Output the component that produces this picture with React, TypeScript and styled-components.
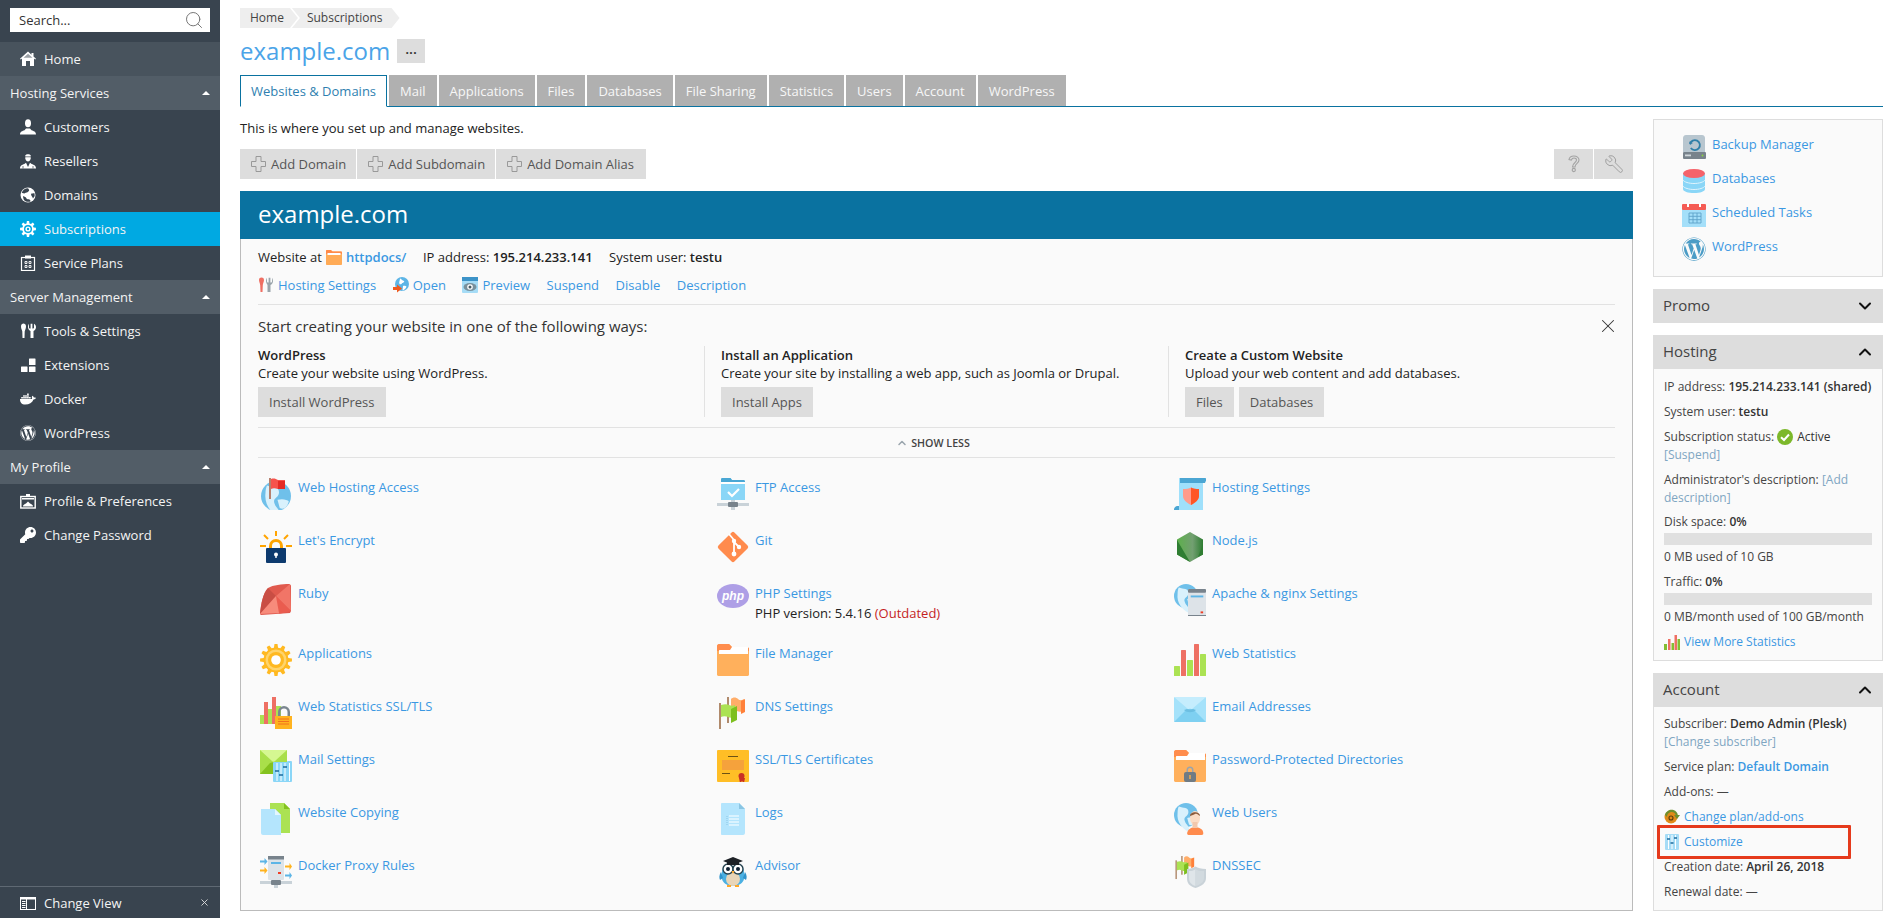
import { ReactNode } from "react";
import styled, { createGlobalStyle } from "styled-components";
import { FaDocker, FaKey, FaWordpress } from "react-icons/fa";
import { ChevronDown, ChevronUp, Search, Wrench, X } from "lucide-react";

const GlobalStyle = createGlobalStyle`
  html, body {
    margin: 0;
    padding: 0;
    height: 918px;
    overflow: hidden;
    background: #fff;
    font-family: "Open Sans", "Liberation Sans", sans-serif;
    font-size: 13px;
    color: #222;
  }
  * { box-sizing: border-box; }
`;

const Page = styled.div`
  display: flex;
  width: 1901px;
  height: 918px;
`;

/* ---------- sidebar ---------- */

const Sidebar = styled.nav`
  width: 220px;
  flex: none;
  height: 918px;
  background: #39444f;
  display: flex;
  flex-direction: column;
  color: #f4f4f4;
`;

const SearchStrip = styled.div`
  height: 42px;
  padding: 8px 10px 0;
`;

const SearchBox = styled.div`
  height: 24px;
  background: #fff;
  color: #333;
  display: flex;
  align-items: center;
  justify-content: space-between;
  padding: 0 6px 0 9px;
  font-size: 13px;
  svg { color: #777; }
`;

const NavRow = styled.div<{ $active?: boolean; $home?: boolean }>`
  height: 34px;
  display: flex;
  align-items: center;
  gap: 8px;
  padding-left: 20px;
  background: ${({ $active, $home }) =>
    $active ? "#00a9e2" : $home ? "#48535d" : "transparent"};
  svg { flex: none; }
`;

const NavGroup = styled.div`
  height: 34px;
  display: flex;
  align-items: center;
  justify-content: space-between;
  padding: 0 10px;
  background: #525d67;
`;

const Caret = styled.span`
  width: 0;
  height: 0;
  border-left: 4px solid transparent;
  border-right: 4px solid transparent;
  border-bottom: 4px solid #fff;
`;

const NavSpacer = styled.div`
  flex: 1;
`;

const ChangeView = styled.div`
  height: 32px;
  border-top: 1px solid #5f6973;
  display: flex;
  align-items: center;
  gap: 8px;
  padding: 0 10px 0 20px;
  span:nth-of-type(1) { flex: 1; }
  > svg:last-child { color: #ddd; }
`;

/* ---------- main ---------- */

const Main = styled.main`
  flex: 1;
  padding: 8px 18px 0 20px;
  display: flex;
  flex-direction: column;
  min-width: 0;
`;

const Breadcrumbs = styled.div`
  display: flex;
  height: 20px;
  font-size: 12px;
  color: #444;
`;

const Crumb = styled.div<{ $first?: boolean }>`
  height: 20px;
  line-height: 20px;
  background: #eee;
  padding: ${({ $first }) => ($first ? "0 14px 0 10px" : "0 17px 0 15px")};
  margin-left: ${({ $first }) => ($first ? "0" : "-6px")};
  clip-path: ${({ $first }) =>
    $first
      ? "polygon(0 0, calc(100% - 8px) 0, 100% 50%, calc(100% - 8px) 100%, 0 100%)"
      : "polygon(0 0, calc(100% - 8px) 0, 100% 50%, calc(100% - 8px) 100%, 0 100%, 8px 50%)"};
`;

const TitleRow = styled.div`
  display: flex;
  align-items: center;
  height: 24px;
  margin-top: 11px;
  gap: 7px;
`;

const Title = styled.h1`
  margin: 0;
  font-size: 24px;
  font-weight: 400;
  color: #4ba4e8;
  line-height: 24px;
`;

const MoreButton = styled.div`
  width: 28px;
  height: 24px;
  background: #ddd;
  color: #333;
  display: flex;
  align-items: center;
  justify-content: center;
  font-weight: 700;
  font-size: 12px;
  letter-spacing: 0.5px;
  padding-bottom: 3px;
`;

const TabBar = styled.div`
  display: flex;
  gap: 2px;
  height: 32px;
  margin-top: 12px;
  border-bottom: 1px solid #0a72a0;
`;

const Tab = styled.div<{ $active?: boolean }>`
  height: ${({ $active }) => ($active ? "32px" : "31px")};
  padding: 0 ${({ $active }) => ($active ? "10px" : "11px")};
  background: ${({ $active }) => ($active ? "#fff" : "#b0b0b0")};
  color: ${({ $active }) => ($active ? "#2f7fb0" : "#f7f7f7")};
  border: ${({ $active }) => ($active ? "1px solid #0a72a0" : "none")};
  border-bottom: ${({ $active }) => ($active ? "1px solid #fff" : "none")};
  line-height: ${({ $active }) => ($active ? "31px" : "33px")};
`;

const Columns = styled.div`
  display: flex;
  gap: 20px;
`;

const LeftColumn = styled.div`
  width: 1393px;
  flex: none;
  padding-top: 11px;
`;

const RightColumn = styled.aside`
  width: 230px;
  flex: none;
  padding-top: 12px;
  display: flex;
  flex-direction: column;
  gap: 12px;
  position: relative;
`;

const Description = styled.p`
  margin: 0;
  line-height: 20px;
`;

const Toolbar = styled.div`
  display: flex;
  justify-content: space-between;
  margin-top: 11px;
`;

const ToolGroup = styled.div`
  display: flex;
  gap: 1px;
`;

const ToolButton = styled.div<{ $square?: boolean; $wide?: boolean }>`
  height: 30px;
  background: #ddd;
  color: #555;
  display: flex;
  align-items: center;
  gap: 5px;
  padding: ${({ $square, $wide }) =>
    $square ? "0" : $wide ? "0 12px 0 11px" : "0 10px 0 11px"};
  width: ${({ $square }) => ($square ? "39px" : "auto")};
  justify-content: ${({ $square }) => ($square ? "center" : "flex-start")};
`;

const Panel = styled.section`
  margin-top: 12px;
`;

const PanelBand = styled.div`
  height: 48px;
  background: #0a72a0;
  color: #fff;
  font-size: 24px;
  line-height: 46px;
  padding-left: 18px;
`;

const PanelBody = styled.div`
  height: 672px;
  background: #fafafa;
  border: 1px solid #bbb;
  border-top: none;
  padding: 8px 17px 0 17px;
`;

const InfoRow = styled.div`
  display: flex;
  align-items: center;
  gap: 16.5px;
  height: 20px;
`;

const Inline = styled.span`
  display: inline-flex;
  align-items: center;
  gap: 4px;
`;

const Strong = styled.b`
  font-weight: 600;
`;

const A = styled.a<{ $bold?: boolean }>`
  color: #3a98e2;
  font-weight: ${({ $bold }) => ($bold ? 600 : 400)};
`;

const ActionRow = styled.div`
  display: flex;
  align-items: center;
  gap: 16.5px;
  height: 20px;
  margin-top: 8px;
`;

const StartHeader = styled.div`
  display: flex;
  justify-content: space-between;
  align-items: center;
  margin-top: 9px;
  border-top: 1px solid #e2e2e2;
  padding-top: 9px;
  height: 33px;
  font-size: 15px;
  color: #333;
  svg { color: #333; margin-right: -4px; }
`;

const StartColumns = styled.div`
  display: grid;
  grid-template-columns: 463px 464px 1fr;
  margin-top: 9px;
  height: 71px;
`;

const StartColumn = styled.div<{ $separated?: boolean }>`
  padding-left: ${({ $separated }) => ($separated ? "16px" : "0")};
  border-left: ${({ $separated }) => ($separated ? "1px solid #e2e2e2" : "none")};
  margin-left: ${({ $separated }) => ($separated ? "-17px" : "0")};
  line-height: 18px;
`;

const StartHeading = styled.div`
  font-weight: 600;
  color: #222;
`;

const StartText = styled.div`
  color: #222;
`;

const StartButtons = styled.div`
  display: flex;
  gap: 5px;
  margin-top: 5px;
`;

const FlatButton = styled.div`
  height: 30px;
  line-height: 30px;
  padding: 0 11px;
  background: #ddd;
  color: #555;
`;

const ShowLess = styled.div`
  height: 31px;
  margin-top: 10px;
  border-top: 1px solid #e2e2e2;
  border-bottom: 1px solid #e2e2e2;
  display: flex;
  align-items: center;
  justify-content: center;
  gap: 3px;
  font-size: 10.7px;
  font-weight: 600;
  color: #444;
  padding-right: 7px;
  svg { color: #9aa5ad; }
`;

const LinkGrid = styled.div`
  display: grid;
  grid-template-columns: repeat(3, 457px);
  row-gap: 21px;
  margin-top: 20px;
  padding-left: 2px;
`;

const LinkItem = styled.div`
  display: flex;
  gap: 6px;
  min-height: 32px;
  line-height: 18px;
  svg { flex: none; }
`;

const LinkNote = styled.div`
  line-height: 19px;
  color: #222;
  margin-top: 2px;
`;

const Outdated = styled.span`
  color: #c51f1f;
`;

/* ---------- right column ---------- */

const QuickBox = styled.div`
  height: 158px;
  background: #fafafa;
  border: 1px solid #ddd;
  padding: 15px 0 0 28px;
  display: flex;
  flex-direction: column;
  gap: 10px;
`;

const QuickLink = styled.div`
  display: flex;
  align-items: flex-start;
  gap: 6px;
  height: 24px;
  line-height: 18px;
  svg { flex: none; }
`;

const CardHeader = styled.div`
  height: 34px;
  background: #ddd;
  display: flex;
  justify-content: space-between;
  align-items: center;
  padding: 0 8px 2px 10px;
  font-size: 15px;
  color: #444;
  svg { color: #111; margin-top: 2px; }
`;

const CardBody = styled.div<{ $tight?: boolean }>`
  background: #fafafa;
  border: 1px solid #ddd;
  border-top: none;
  padding: ${({ $tight }) => ($tight ? "8px 10px 9px" : "9px 10px")};
  font-size: 12px;
  line-height: 18px;
  color: #444;
`;

const Fact = styled.div<{ $close?: boolean }>`
  margin-bottom: ${({ $close }) => ($close ? "6px" : "7px")};
  &:last-child { margin-bottom: 0; }
`;

const FactStrong = styled.b`
  font-weight: 600;
  color: #333;
`;

const Muted = styled.span`
  color: #7fa6c2;
`;

const StatusLine = styled.div`
  display: flex;
  align-items: center;
  gap: 3px;
  height: 18px;
  color: #444;
`;

const StatusValue = styled.span`
  color: #333;
  margin-left: 1px;
`;

const Usage = styled.div`
  height: 12px;
  background: #e0e0e0;
  margin: 2px 0 3px;
`;

const WithIcon = styled.div`
  display: flex;
  align-items: center;
  gap: 4px;
  height: 18px;
  margin-bottom: 7px;
  &:last-child { margin-bottom: 0; }
`;

const Highlight = styled.div`
  position: absolute;
  left: 4px;
  top: 718px;
  width: 194px;
  height: 34px;
  border: 3px solid #e53a1c;
  border-radius: 1px;
  pointer-events: none;
`;

/* ---------- icons ---------- */

function gearPath(c: number, rOut: number, rIn: number, teeth: number) {
  const pts: string[] = [];
  for (let i = 0; i < teeth; i++) {
    const step = (Math.PI * 2) / teeth;
    const a = i * step - Math.PI / 2;
    const p = (r: number, d: number) =>
      `${(c + r * Math.cos(a + d)).toFixed(2)} ${(c + r * Math.sin(a + d)).toFixed(2)}`;
    pts.push(p(rIn, -step * 0.32), p(rOut, -step * 0.18), p(rOut, step * 0.18), p(rIn, step * 0.32));
  }
  return `M${pts.join("L")}Z`;
}

const White = ({ children, size = 16 }: { children: ReactNode; size?: number }) => (
  <svg width={size} height={size} viewBox="0 0 16 16" fill="#fff">
    {children}
  </svg>
);

const NavHome = () => (
  <White>
    <path d="M8 .5 0 7.8l.8.8L2 7.6V15h4v-5h4v5h4V7.6l1.2 1 .8-.8L13.500 5.500V2h-2v1.700z" />
    <path d="M8 2.800 3.500 6.800h9z" fill="#48535d" opacity=".55" />
  </White>
);
const NavCustomer = () => (
  <White>
    <ellipse cx="8" cy="4.300" rx="3" ry="4" />
    <path d="M0 15.500c0-3 2.500-3.600 4.500-4.300L6 9.500h4l1.500 1.700c2 .7 4.500 1.300 4.500 4.300z" />
  </White>
);
const NavReseller = () => (
  <White>
    <path d="M5.300 2.500C6 .8 10 .8 10.700 2.500v2.700C10.500 7.500 9 8.500 8 8.500S5.500 7.500 5.300 5.200z" />
    <path d="M5 3.800h6" stroke="#39444f" strokeWidth=".7" />
    <path d="M0 15.500c0-3 2-3.500 4.300-4.500L6 9.700 8 14l2-4.300 1.700 1.300c2.300 1 4.300 1.500 4.300 4.500z" />
    <path d="M3 13v2.500M13 13v2.500" stroke="#39444f" strokeWidth=".7" />
  </White>
);
const NavGlobe = () => (
  <White>
    <circle cx="8" cy="8" r="7.500" />
    <path d="M8 1.300c-3 0-5.500 2-6.300 4.800.8-.4 1.700.2 2.800.4.600-1 2-.6 3-1.300C8.800 4.300 9.500 3.500 9 2.800 8.800 2.300 8.400 1.800 8 1.300zM3 9c1.500.8 3 1 3.500 2.500.4 1 2 .4 3 1 .8.500 1.200 1.300 1 2-1 .3-5 .8-6.700-1.800C3.300 11.500 3 10 3 9zM11 6.800c1-.4 2.500-.8 3.500-.5l.2 2.700-1.700 2.500c-.5-1.700-2-2.500-2-4.700z" fill="#39444f" />
  </White>
);
const NavGear = () => (
  <svg width="16" height="16" viewBox="0 0 16 16">
    <path d={gearPath(8, 8, 5.800, 8)} fill="#fff" />
    <circle cx="8" cy="8" r="4" fill="#00a9e2" />
    <circle cx="8" cy="8" r="2.600" fill="#fff" />
    <circle cx="8" cy="8" r="1.200" fill="#00a9e2" />
  </svg>
);
const NavPlans = () => (
  <svg width="16" height="16" viewBox="0 0 16 16" fill="none" stroke="#fff">
    <rect x="1.500" y="2.500" width="13" height="13" strokeWidth="1.200" />
    <rect x="5" y=".5" width="6" height="3" fill="#fff" stroke="none" />
    <path d="M5 6.500h2v2H5zM9 6.500h2v2H9zM5 10.500h2v2H5zM9 10.500h2v2H9z" strokeWidth=".9" />
  </svg>
);
const NavTools = () => (
  <White>
    <path d="M1 3.500C1 1.300 2.300.5 3.500.5S6 1.300 6 3.500 5 7 4.700 8.500L4.500 15h-2l-.2-6.500C2 7 1 5.500 1 3.500z" />
    <path d="M9 .8V4.500c0 .6.500 1 1 1h.6V.8h1.800v4.700h.6c.5 0 1-.4 1-1V.8C15.500 1.500 16 3 16 4.200c0 2-1.500 3.300-2.500 3.800V15h-3V8C9.500 7.500 8 6.200 8 4.200 8 3 8.400 1.500 9 .8z" />
  </White>
);
const NavExtensions = () => (
  <White>
    <rect x="1" y="9.500" width="6.500" height="5.500" rx=".5" />
    <rect x="9" y="9.500" width="6.500" height="5.500" rx=".5" />
    <rect x="9" y="1.500" width="6.500" height="6.500" rx=".5" />
  </White>
);
const NavProfile = () => (
  <svg width="16" height="16" viewBox="0 0 16 16" fill="none">
    <rect x=".8" y="3.500" width="14.400" height="11.500" stroke="#fff" strokeWidth="1.400" />
    <rect x="6" y="1" width="4" height="3" fill="#fff" />
    <path d="M3 13.500c0-2 1.500-2 3-3l2-2 2 2c1.500 1 3 1 3 3z" fill="#fff" />
    <rect x="2" y="5" width="12" height="1.500" fill="#fff" />
  </svg>
);
const NavChangeView = () => (
  <svg width="16" height="16" viewBox="0 0 16 16" fill="none" stroke="#fff">
    <rect x=".5" y="2.500" width="15" height="12" strokeWidth="1" />
    <path d="M.5 3.500h15" strokeWidth="2" />
    <path d="M2 6.500h3.500M2 8.500h3.500M2 10.500h3.500M2 12.500h3.500" strokeWidth="1" />
    <path d="M6.500 3v11" strokeWidth="1" />
  </svg>
);

const PlusIcon = () => (
  <svg width="15" height="16" viewBox="0 0 15 16" fill="none" stroke="#999">
    <path d="M5 .5h5v5h4.500v5H10v5H5v-5H.5v-5H5z" />
  </svg>
);
const QuestionIcon = () => (
  <svg width="14" height="18" viewBox="0 0 14 18" fill="none" stroke="#a3a3a3" strokeWidth="1.100">
    <path d="M2 4.500C2.500 2 4.500 1 6.800 1 9.800 1 12 2.700 12 5c0 3.500-4 3.300-4 7H5.500c0-4.500 4-4 4-7C9.500 3.700 8.400 3 7 3 5.700 3 4.800 3.700 4.300 5z" />
    <circle cx="6.800" cy="15" r="1.600" />
  </svg>
);
const MirroredWrench = styled(Wrench)`
  transform: scaleX(-1);
`;

const TinyFolder = () => (
  <svg width="16" height="15" viewBox="0 0 16 15">
    <path d="M0 1.200C0 .5.500 0 1.200 0h3.600L6.500 1.500h8.300c.7 0 1.200.5 1.200 1.200V14c0 .6-.5 1-1 1H1c-.6 0-1-.4-1-1z" fill="#ffab57" />
    <path d="M0 1.200C0 .5.500 0 1.200 0h3.600L6.500 1.500h8.300c.7 0 1.200.5 1.200 1.200V4H0z" fill="#ff8a4a" />
    <path d="M1.500 3h13v2h-13z" fill="#fff" />
  </svg>
);
const TinyTools = () => (
  <svg width="16" height="16" viewBox="0 0 16 16">
    <path d="M1 3C1 1.300 2 .5 3.500.5S6 1.300 6 3c0 2-1 3-1.200 5L4.500 15h-2l-.3-7C2 6 1 5 1 3z" fill="#ef6f63" />
    <path d="M9 .8v3.700c0 .6.500 1 1 1h.6V.8h1.800v4.700h.6c.5 0 1-.4 1-1V.8c.5.700 1 2.200 1 3.400 0 2-1.500 3.300-2.500 3.800V15h-3V8C9.500 7.500 8 6.200 8 4.200 8 3 8.400 1.500 9 .8z" fill="#9aa4ab" />
  </svg>
);
const TinyOpen = () => (
  <svg width="16" height="18" viewBox="0 0 16 18">
    <circle cx="9" cy="8" r="7" fill="#5db5e6" />
    <path d="M7 2.500c2 .3 1.500 2 3.500 2.200 1.500.3.500 2-1.300 2.300-.700 1.500-1.500 1.500-2.700 1C5.500 6.500 7 4.500 7 2.500zM10 10c1.500-.5 3 0 3.500.8C12.500 13 11 14 9.500 14.500z" fill="#fff" />
    <path d="M0 11h4V8.500L9 12.500l-5 4V14H0z" fill="#f25a1d" />
  </svg>
);
const TinyPreview = () => (
  <svg width="16" height="16" viewBox="0 0 16 16">
    <rect y="0" width="16" height="16" rx="1" fill="#a6dcf6" />
    <rect y="0" width="16" height="4" fill="#3c93c8" />
    <ellipse cx="8" cy="10" rx="6.500" ry="4" fill="#78909c" />
    <circle cx="8" cy="10" r="2.800" fill="#fff" />
    <circle cx="8" cy="10" r="1.500" fill="#455a64" />
  </svg>
);
const GreenCheck = () => (
  <svg width="16" height="16" viewBox="0 0 16 16">
    <circle cx="8" cy="8" r="8" fill="#7cb82a" />
    <path d="M4 8.200 7 11l5-5.500" fill="none" stroke="#fff" strokeWidth="2" />
  </svg>
);
const TinyChart = () => (
  <svg width="16" height="16" viewBox="0 0 16 16">
    <rect x="0" y="10" width="3" height="6" fill="#84bd32" />
    <rect x="4" y="5" width="2.500" height="11" fill="#ef6f63" />
    <rect x="7.500" y="9" width="2.500" height="7" fill="#84bd32" />
    <rect x="10.500" y="1" width="2.500" height="15" fill="#ef6f63" />
    <rect x="13.500" y="5" width="2.500" height="11" fill="#84bd32" />
  </svg>
);
const TinyChange = () => (
  <svg width="16" height="16" viewBox="0 0 16 16">
    <circle cx="7" cy="8" r="6.500" fill="#e08a18" />
    <path d="M1 6c.8-4 5-6 8.500-5 2.500.8 4 2.700 4.300 5H16l-3 4-3-4h1.800C11 3.500 8.500 2.500 6.300 3.300 4 4 3 6 3 8z" fill="#6d8f2e" />
    <circle cx="7" cy="9" r="2" fill="none" stroke="#5a3d0c" strokeWidth="1.100" />
  </svg>
);
const TinySliders = () => (
  <svg width="16" height="16" viewBox="0 0 16 16">
    <rect width="14" height="16" x="1" rx="1" fill="#a6dcf6" />
    <path d="M4.500 1v14M8 1v14M11.500 1v14" stroke="#fff" />
    <path d="M3 5h3M6.500 9h3M10 4h3" stroke="#1c6b9f" strokeWidth="1.500" />
  </svg>
);

const Ic = ({ children, w = 32, h = 32, s = 32 }: { children: ReactNode; w?: number; h?: number; s?: number }) => (
  <svg width={s} height={s} viewBox={`0 0 ${w} ${h}`}>
    {children}
  </svg>
);

const GlobeArt = ({ cx, cy, r }: { cx: number; cy: number; r: number }) => (
  <>
    <circle cx={cx} cy={cy} r={r} fill="#6fc0ea" />
    <path
      d={`M${cx - r * 0.6} ${cy - r * 0.7}c${r * 0.4} ${r * 0.15} ${r * 0.8} ${r * 0.05} ${r * 0.8} ${r * 0.45}s${-r * 0.45} ${r * 0.35} ${-r * 0.3} ${r * 0.75}c${r * 0.1} ${r * 0.35} ${r * 0.5} ${r * 0.45} ${r * 0.3} ${r * 0.9}c${-r * 0.5} ${-r * 0.25} ${-r * 1} ${-r * 0.8} ${-r * 0.9} ${-r * 1.6}c0 ${-r * 0.2} ${r * 0.05} ${-r * 0.4} ${r * 0.1} ${-r * 0.5}z`}
      fill="#d9f1fc"
    />
    <path d={`M${cx + r * 0.1} ${cy + r * 0.25}c${r * 0.35} ${-r * 0.1} ${r * 0.65} 0 ${r * 0.75} ${r * 0.1}-${r * 0.1} ${r * 0.4}-${r * 0.35} ${r * 0.6}-${r * 0.6} ${r * 0.45}z`} fill="#d9f1fc" />
  </>
);

const ServerBox = ({ x, y, w, h }: { x: number; y: number; w: number; h: number }) => (
  <>
    <rect x={x} y={y} width={w} height={h} rx="1" fill="#dde3e8" />
    <rect x={x} y={y} width={w} height={h * 0.14} rx="1" fill="#78838c" />
    <rect x={x + w * 0.15} y={y + h * 0.24} width={w * 0.7} height={h * 0.07} fill="#5db5e6" />
    <rect x={x + w * 0.7} y={y + h * 0.83} width={w * 0.14} height={h * 0.07} fill="#ef3d25" />
    <rect x={x} y={y + h - 1} width={w} height="1" fill="#78838c" />
  </>
);

const FlagsArt = () => (
  <g>
    <rect x="2" y="6" width="2" height="26" fill="#b08a6c" />
    <rect x="10" y="0" width="2" height="26" fill="#b08a6c" />
    <path d="M14 2c2-2 5-2 7 0s5 1 6 0v12c-3 1-5 1-7 0s-4-1-6 0z" fill="#ffad69" />
    <path d="M24 4l4-2v13l-4 2z" fill="#ff8039" />
    <path d="M4 8c3-1 6-1 8 0s4 1 6 0v12c-3 1-5 1-7 0s-5-1-7 0z" fill="#abe253" />
    <path d="M14 12l6-3v14l-6 3z" fill="#7dbf1e" />
  </g>
);

const IWebHosting = () => (
  <Ic>
    <GlobeArt cx={16} cy={18} r={15} />
    <rect x="9" y="0" width="2" height="21" fill="#b6806d" />
    <path d="M11 1c3-1 5 0 7 1h7v9h-7c-3-1-5-1-7 0z" fill="#f6534c" />
    <rect x="18" y="3" width="7" height="8" fill="#e52b24" />
  </Ic>
);
const IFtp = () => (
  <Ic>
    <path d="M4 1.500C4 .7 4.500 0 5.500 0h8L15 2h11.500c.8 0 1.500.7 1.500 1.500V22H4z" fill="#8ad6f7" />
    <path d="M4 1.500C4 .7 4.500 0 5.500 0h8L15 2h11.500c.8 0 1.500.7 1.500 1.500V5H4z" fill="#4aa7d4" />
    <rect x="4" y="4" width="24" height="2" fill="#fff" />
    <path d="M11 14l4 4 7-7" fill="none" stroke="#fff" strokeWidth="2.200" />
    <rect x="14" y="22" width="4" height="10" fill="#c9d2d8" />
    <rect x="0" y="25" width="32" height="3" fill="#c9d2d8" />
    <rect x="11" y="24" width="10" height="5" rx="1" fill="#78838c" />
  </Ic>
);
const IHostingSettings = () => (
  <Ic>
    <path d="M5 0h27l-1 4H29v28H0c0-2 1-3 3-4h2z" fill="#9fe0fb" />
    <path d="M6 0h25c1 0 1.500 1 1 2.500L31 5H6z" fill="#4ba6d3" />
    <path d="M0 32c0-2 .5-3 3-4h2v4z" fill="#4ba6d3" />
    <path d="M9 11c3 0 6-.5 8-1.500 2 1 5 1.500 8 1.500v7c0 4-4 7-8 9-4-2-8-5-8-9z" fill="#ff9b8c" />
    <path d="M17 9.500c2 1 5 1.500 8 1.500v7c0 4-4 7-8 9z" fill="#ff5626" />
  </Ic>
);
const ILetsEncrypt = () => (
  <Ic>
    <path d="M9 18v-3a7 7 0 0 1 14 0v3h-3v-3a4 4 0 0 0-8 0v3z" fill="#ffa400" />
    <path d="M16 0v5M4 4l4 4M28 4l-4 4M0 15h6M26 15h6" stroke="#ffa400" strokeWidth="2" />
    <rect x="6" y="17" width="20" height="15" rx="1" fill="#0d3a6e" />
    <circle cx="16" cy="23.500" r="2" fill="#fff" />
    <rect x="15.300" y="24" width="1.400" height="3" fill="#fff" />
  </Ic>
);
const IGit = () => (
  <Ic>
    <rect x="4.700" y="4.700" width="22.600" height="22.600" rx="2" transform="rotate(45 16 16)" fill="#ff8b4d" />
    <path d="M12 3l5 6v12M17 11l5 5" fill="none" stroke="#fff" strokeWidth="1.800" />
    <circle cx="17" cy="10" r="2.200" fill="#fff" />
    <circle cx="17" cy="23" r="2.400" fill="#fff" />
    <circle cx="22" cy="16" r="2.200" fill="#fff" />
  </Ic>
);
const INode = () => (
  <Ic>
    <defs>
      <linearGradient id="nodeGrad" x1="0" y1="0" x2="1" y2="0">
        <stop offset="0" stopColor="#5db04b" />
        <stop offset="0.6" stopColor="#729f71" />
        <stop offset="1" stopColor="#2e7d32" />
      </linearGradient>
    </defs>
    <path d="M16 1l13 7.500v15L16 31 3 23.500v-15z" fill="url(#nodeGrad)" />
    <path d="M3 9l13 22L3 23.500zM29 13v10.500L24 26z" fill="#2f7d32" />
  </Ic>
);
const IRuby = () => (
  <Ic>
    <path d="M8 4c5-3 14-4 21-4 1 0 2 1 2 2v25l-1 2-29 2c-.5 0-1-1-1-1.500C1 20 3 9 8 4z" fill="#e05a4e" />
    <path d="M8 4l8 8L0 30C1 20 3 9 8 4z" fill="#c94e44" />
    <path d="M16 12l14-12 1 27z" fill="#f17567" />
    <path d="M16 12l15 15-12 3z" fill="#ec5d50" opacity=".8" />
    <path d="M0 30l19-1-3-17z" fill="#f78b7b" />
  </Ic>
);
const IPhp = () => (
  <Ic>
    <ellipse cx="16" cy="12" rx="16" ry="12" fill="#ae9fe6" />
    <text x="16" y="16" textAnchor="middle" fontFamily="'Liberation Sans', sans-serif" fontSize="12" fontWeight="700" fontStyle="italic" fill="#fff">
      php
    </text>
  </Ic>
);
const IApache = () => (
  <Ic>
    <GlobeArt cx={12} cy={12} r={12} />
    <ServerBox x={14} y={5} w={18} h={27} />
  </Ic>
);
const IApplications = () => (
  <Ic>
    <path d={gearPath(16, 16, 12.500, 12)} fill="#ffb921" />
    <circle cx="16" cy="16" r="10.500" fill="#ffd46b" />
    <circle cx="16" cy="16" r="8" fill="#ffb921" />
    <circle cx="16" cy="16" r="4.800" fill="#fff" />
  </Ic>
);
const FolderArt = () => (
  <>
    <path d="M0 2c0-1 1-2 2-2h10l3 3h15c1 0 2 1 2 2v25c0 1-1 2-2 2H2c-1 0-2-1-2-2z" fill="#ffb05c" />
    <path d="M0 2c0-1 1-2 2-2h10l3 3h15c1 0 2 1 2 2v2H0z" fill="#ff8d4d" />
    <path d="M2 8c0-2 0-2 1-2h10l2-3h15l1 0v7H2z" fill="#fff" />
    <path d="M0 12h32V30c0 1-1 2-2 2H2c-1 0-2-1-2-2z" fill="#ffb05c" />
  </>
);
const IFolder = () => (
  <Ic>
    <FolderArt />
  </Ic>
);
const IStats = () => (
  <Ic>
    <rect x="0" y="22" width="6" height="10" rx=".5" fill="#abe253" />
    <rect x="7" y="6" width="5" height="26" rx=".5" fill="#ee7064" />
    <rect x="13" y="16" width="6" height="16" rx=".5" fill="#abe253" />
    <rect x="20" y="0" width="5" height="32" rx=".5" fill="#ee7064" />
    <rect x="26" y="10" width="6" height="22" rx=".5" fill="#abe253" />
  </Ic>
);
const IStatsSsl = () => (
  <Ic>
    <rect x="0" y="18" width="6" height="9" fill="#abe253" />
    <rect x="4" y="5" width="4" height="22" fill="#ee7064" />
    <rect x="8" y="12" width="5" height="15" fill="#abe253" />
    <rect x="12" y="0" width="4" height="27" fill="#ee7064" />
    <rect x="16" y="9" width="5" height="18" fill="#abe253" />
    <path d="M18 20v-5a6 6 0 0 1 12 0v5h-2.500v-5a3.500 3.500 0 0 0-7 0v5z" fill="#7a868f" />
    <rect x="15" y="19" width="17" height="13" fill="#ffb31f" />
    <path d="M18 22h11M18 24.500h11M18 27h11" stroke="#f2711c" strokeWidth="1" />
  </Ic>
);
const IDns = () => (
  <Ic>
    <FlagsArt />
  </Ic>
);
const IEmail = () => (
  <Ic>
    <rect y="0" width="32" height="25" rx="1" fill="#a5e2fa" />
    <path d="M0 0h32L18 12c-1 1-3 1-4 0z" fill="#c5edfd" />
    <path d="M0 25l11-11c3-3 7-3 10 0l11 11z" fill="#7ed0f1" />
    <path d="M10 13l3-1c2 1 4 1 6 0l3 1c-3 3-9 3-12 0z" fill="#6cbfe2" />
  </Ic>
);
const IMail = () => (
  <Ic>
    <rect x="0" y="0" width="27" height="24" fill="#a9df4a" />
    <path d="M0 0h27L15 11c-1 1-2 1-3 0z" fill="#d5f791" />
    <path d="M0 24l10-11c2-1 5-1 7 0l10 11z" fill="#84c21f" />
    <rect x="13" y="12" width="16" height="20" rx="1" fill="#8ad6f7" />
    <path d="M17 13v18M21 13v18M25 13v18" stroke="#fff" strokeWidth="1" />
    <path d="M15 21h4M19 25h4M23 17h4" stroke="#1c6b9f" strokeWidth="1.500" />
    <rect x="27" y="11" width="5" height="21" rx="1" fill="#8ad6f7" />
    <path d="M29.500 13v18" stroke="#fff" />
  </Ic>
);
const ICert = () => (
  <Ic>
    <rect width="32" height="32" rx="1" fill="#ffbe26" />
    <rect x="5" y="10" width="22" height="10" fill="#f5a23c" />
    <rect x="11" y="6" width="10" height="1" fill="#6d5314" />
    <rect x="5" y="23" width="8" height="1" fill="#6d5314" />
    <path d="M22 28l1 5 2-2 2 2 1-5z" fill="#c93125" />
    <circle cx="24.500" cy="26" r="3" fill="#c93125" />
  </Ic>
);
const IFolderLock = () => (
  <Ic>
    <FolderArt />
    <path d="M12.500 24v-4a3.500 3.500 0 0 1 7 0v4h-1.500v-4a2 2 0 0 0-4 0v4z" fill="#9aa4ab" />
    <rect x="10" y="22" width="12" height="10" rx="2" fill="#707b84" />
    <rect x="15" y="25" width="2" height="4" fill="#d0a05c" />
  </Ic>
);
const ICopy = () => (
  <Ic>
    <path d="M10 0h14l6 6v24H10z" fill="#abe253" />
    <path d="M24 0l6 6h-6z" fill="#84c21f" />
    <path d="M1 6h14l6 6v20H3c-1 0-2-1-2-2z" fill="#b4e5fd" />
    <path d="M15 6l6 6h-6z" fill="#e3f6ff" />
  </Ic>
);
const ILogs = () => (
  <Ic>
    <path d="M4 1c0-.5.500-1 1-1h17l6 6v24c0 1-1 2-2 2H5c-.5 0-1-.5-1-1z" fill="#b4e5fd" />
    <path d="M22 0l6 6h-6z" fill="#8ac5e3" />
    <path d="M12 13h10M12 16h10M12 19h10M12 22h10" stroke="#e6f7ff" strokeWidth="1.600" />
    <path d="M10 13v10" stroke="#8ac5e3" strokeDasharray="1 1" />
  </Ic>
);
const IWebUsers = () => (
  <Ic>
    <GlobeArt cx={12} cy={12} r={12} />
    <path d="M9 32c-1 0-1.500-1-1.500-2 1-4 4-5 7-6h3c3 1 7 2 7 6 0 1 0 2-2 2z" fill="#ff8b4d" transform="translate(6 0) scale(.95 1)" />
    <ellipse cx="21" cy="15" rx="5" ry="7" fill="#fbdcc4" />
    <rect x="18.500" y="19" width="5" height="6" fill="#f2c8ac" />
    <path d="M16 13c0-5 10-5 10 0-2-1-3-3-5-2-1 1-3 1-5 2z" fill="#8a5b3c" />
  </Ic>
);
const IDocker = () => (
  <Ic>
    <rect x="8" y="0" width="16" height="24" rx="1" fill="#dde3e8" />
    <rect x="8" y="0" width="16" height="3.500" fill="#78838c" />
    <rect x="11" y="6" width="10" height="2" fill="#5db5e6" />
    <rect x="18" y="16" width="3" height="2" fill="#ef3d25" />
    <path d="M0 4.500h4.500V2l3 3.500-3 3.500V6.500H0z" fill="#5db5e6" />
    <path d="M0 13.500h4.500V11l3 3.500-3 3.500v-2.500H0z" fill="#ffb31f" />
    <path d="M25 9.500h4.500V7l2.500 3.500L29.500 14v-2.500H25z" fill="#ffb31f" />
    <path d="M25 18.500h4.500V16l2.500 3.500-2.500 3.500v-2.500H25z" fill="#5db5e6" />
    <rect x="14" y="24" width="4" height="8" fill="#c9d2d8" />
    <rect x="0" y="25" width="32" height="3" fill="#c9d2d8" />
    <rect x="11" y="24" width="10" height="5" rx="1" fill="#78838c" />
  </Ic>
);
const IOwl = () => (
  <Ic>
    <path d="M7 10c-2 3-3 9-2 13 1 4 5 7 11 7s10-3 11-7c1-4 0-10-2-13z" fill="#4bb0e2" />
    <path d="M4 16c-2 3-2 6-1 8l3-2zM28 16c2 3 2 6 1 8l-3-2z" fill="#3094cc" />
    <ellipse cx="16" cy="23" rx="7" ry="7" fill="#e8d5b8" />
    <circle cx="11" cy="13" r="5" fill="#fff" stroke="#25424f" strokeWidth="1.400" />
    <circle cx="21" cy="13" r="5" fill="#fff" stroke="#25424f" strokeWidth="1.400" />
    <circle cx="11" cy="13" r="2" fill="#123" />
    <circle cx="21" cy="13" r="2" fill="#123" />
    <path d="M14.500 15l1.500 3 1.500-3z" fill="#ffa726" />
    <path d="M6 5l10-4 10 4-10 4z" fill="#1d2126" />
    <rect x="10" y="6" width="12" height="3" fill="#1d2126" />
    <path d="M10 31h4v-2h-4zM18 31h4v-2h-4z" fill="#ffa726" />
  </Ic>
);
const IDnssec = () => (
  <Ic>
    <g transform="scale(.72)">
      <FlagsArt />
    </g>
    <path d="M13 13c4 0 6-1 8.500-2.500C24 12 27 13 32 13v9c0 5-4 8-10.500 10C15 30 13 27 13 22z" fill="#c9d2d8" />
    <path d="M15 15c3 0 4.500-.5 6.500-1.800V30C17 28.500 15 26 15 22z" fill="#dfe5e9" />
    <path d="M21.500 13.200c2 1.300 4 1.800 8.500 1.800v7c0 4-3.500 6.500-8.500 8z" fill="#d2dadf" />
  </Ic>
);

const QBackup = () => (
  <Ic w={24} h={24} s={24}>
    <path d="M1 3c0-1.500 1-3 3-3h16c2 0 3 1.500 3 3v14H1z" fill="#b8c6cf" />
    <rect x="1" y="17" width="23" height="7" rx="1" fill="#78838c" />
    <rect x="3" y="19.500" width="6" height="1.800" fill="#d0d7db" />
    <circle cx="20.500" cy="20.500" r="1" fill="#8cd440" />
    <path d="M7 6.500l1 3.500 3-2" fill="#4a88ad" />
    <path d="M8 9a5 5 0 1 1 .8 4" fill="none" stroke="#2f7fa8" strokeWidth="1.800" />
  </Ic>
);
const QDatabase = () => (
  <Ic w={24} h={24} s={24}>
    <path d="M1 4h22v16c0 2.500-5 4-11 4S1 22.500 1 20z" fill="#8ad6f7" />
    <path d="M1 11c1 2 6 3.500 11 3.500S22 13 23 11M1 17c1 2 6 3.500 11 3.500S22 19 23 17" fill="none" stroke="#dff4fd" strokeWidth="1" />
    <ellipse cx="12" cy="4.500" rx="11" ry="4.500" fill="#f5636a" />
  </Ic>
);
const QCalendar = () => (
  <Ic w={24} h={24} s={24}>
    <rect x="0" y="3" width="24" height="21" fill="#a4dff9" />
    <rect x="0" y="1" width="24" height="6" rx="1" fill="#f55b54" />
    <rect x="5" y="0" width="2" height="4" fill="#fff" />
    <rect x="17" y="0" width="2" height="4" fill="#fff" />
    <path d="M7 10h12v10H7zM7 13.300h12M7 16.700h12M11 10v10M15 10v10" fill="none" stroke="#5ea3c8" strokeWidth=".9" />
  </Ic>
);

/* ---------- data ---------- */

const HOSTING_NAV: [ReactNode, string][] = [
  [<NavCustomer key="c" />, "Customers"],
  [<NavReseller key="r" />, "Resellers"],
  [<NavGlobe key="d" />, "Domains"],
  [<NavGear key="s" />, "Subscriptions"],
  [<NavPlans key="p" />, "Service Plans"],
];

const SERVER_NAV: [ReactNode, string][] = [
  [<NavTools key="t" />, "Tools & Settings"],
  [<NavExtensions key="e" />, "Extensions"],
  [<FaDocker key="d" size={16} color="#fff" />, "Docker"],
  [<FaWordpress key="w" size={16} color="#fff" />, "WordPress"],
];

const PROFILE_NAV: [ReactNode, string][] = [
  [<NavProfile key="p" />, "Profile & Preferences"],
  [<FaKey key="k" size={16} color="#fff" />, "Change Password"],
];

const TABS = [
  "Websites & Domains",
  "Mail",
  "Applications",
  "Files",
  "Databases",
  "File Sharing",
  "Statistics",
  "Users",
  "Account",
  "WordPress",
];

type Tile = { icon: ReactNode; label: string; note?: ReactNode };

const TILES: Tile[] = [
  { icon: <IWebHosting />, label: "Web Hosting Access" },
  { icon: <IFtp />, label: "FTP Access" },
  { icon: <IHostingSettings />, label: "Hosting Settings" },
  { icon: <ILetsEncrypt />, label: "Let's Encrypt" },
  { icon: <IGit />, label: "Git" },
  { icon: <INode />, label: "Node.js" },
  { icon: <IRuby />, label: "Ruby" },
  {
    icon: <IPhp />,
    label: "PHP Settings",
    note: (
      <>
        PHP version: 5.4.16 <Outdated>(Outdated)</Outdated>
      </>
    ),
  },
  { icon: <IApache />, label: "Apache & nginx Settings" },
  { icon: <IApplications />, label: "Applications" },
  { icon: <IFolder />, label: "File Manager" },
  { icon: <IStats />, label: "Web Statistics" },
  { icon: <IStatsSsl />, label: "Web Statistics SSL/TLS" },
  { icon: <IDns />, label: "DNS Settings" },
  { icon: <IEmail />, label: "Email Addresses" },
  { icon: <IMail />, label: "Mail Settings" },
  { icon: <ICert />, label: "SSL/TLS Certificates" },
  { icon: <IFolderLock />, label: "Password-Protected Directories" },
  { icon: <ICopy />, label: "Website Copying" },
  { icon: <ILogs />, label: "Logs" },
  { icon: <IWebUsers />, label: "Web Users" },
  { icon: <IDocker />, label: "Docker Proxy Rules" },
  { icon: <IOwl />, label: "Advisor" },
  { icon: <IDnssec />, label: "DNSSEC" },
];

function NavSection({ title, items }: { title: string; items: [ReactNode, string][] }) {
  return (
    <>
      <NavGroup>
        {title}
        <Caret />
      </NavGroup>
      {items.map(([icon, label]) => (
        <NavRow key={label} $active={label === "Subscriptions"}>
          {icon}
          <span>{label}</span>
        </NavRow>
      ))}
    </>
  );
}

export default function App() {
  return (
    <Page>
      <GlobalStyle />
      <Sidebar>
        <SearchStrip>
          <SearchBox>
            Search...
            <Search size={20} strokeWidth={1.2} />
          </SearchBox>
        </SearchStrip>
        <NavRow $home>
          <NavHome />
          <span>Home</span>
        </NavRow>
        <NavSection title="Hosting Services" items={HOSTING_NAV} />
        <NavSection title="Server Management" items={SERVER_NAV} />
        <NavSection title="My Profile" items={PROFILE_NAV} />
        <NavSpacer />
        <ChangeView>
          <NavChangeView />
          <span>Change View</span>
          <X size={11} strokeWidth={2} />
        </ChangeView>
      </Sidebar>

      <Main>
        <Breadcrumbs>
          <Crumb $first>Home</Crumb>
          <Crumb>Subscriptions</Crumb>
        </Breadcrumbs>
        <TitleRow>
          <Title>example.com</Title>
          <MoreButton>...</MoreButton>
        </TitleRow>
        <TabBar>
          {TABS.map((t, i) => (
            <Tab key={t} $active={i === 0}>
              {t}
            </Tab>
          ))}
        </TabBar>

        <Columns>
          <LeftColumn>
            <Description>This is where you set up and manage websites.</Description>
            <Toolbar>
              <ToolGroup>
                <ToolButton>
                  <PlusIcon /> Add Domain
                </ToolButton>
                <ToolButton>
                  <PlusIcon /> Add Subdomain
                </ToolButton>
                <ToolButton $wide>
                  <PlusIcon /> Add Domain Alias
                </ToolButton>
              </ToolGroup>
              <ToolGroup>
                <ToolButton $square>
                  <QuestionIcon />
                </ToolButton>
                <ToolButton $square>
                  <MirroredWrench size={20} strokeWidth={1.1} color="#999" />
                </ToolButton>
              </ToolGroup>
            </Toolbar>

            <Panel>
              <PanelBand>example.com</PanelBand>
              <PanelBody>
                <InfoRow>
                  <Inline>
                    Website at <TinyFolder />
                    <A $bold>httpdocs/</A>
                  </Inline>
                  <span>
                    IP address: <Strong>195.214.233.141</Strong>
                  </span>
                  <span>
                    System user: <Strong>testu</Strong>
                  </span>
                </InfoRow>
                <ActionRow>
                  <Inline>
                    <TinyTools />
                    <A>Hosting Settings</A>
                  </Inline>
                  <Inline>
                    <TinyOpen />
                    <A>Open</A>
                  </Inline>
                  <Inline>
                    <TinyPreview />
                    <A>Preview</A>
                  </Inline>
                  <A>Suspend</A>
                  <A>Disable</A>
                  <A>Description</A>
                </ActionRow>
                <StartHeader>
                  Start creating your website in one of the following ways:
                  <X size={22} strokeWidth={1.1} />
                </StartHeader>
                <StartColumns>
                  <StartColumn>
                    <StartHeading>WordPress</StartHeading>
                    <StartText>Create your website using WordPress.</StartText>
                    <StartButtons>
                      <FlatButton>Install WordPress</FlatButton>
                    </StartButtons>
                  </StartColumn>
                  <StartColumn $separated>
                    <StartHeading>Install an Application</StartHeading>
                    <StartText>Create your site by installing a web app, such as Joomla or Drupal.</StartText>
                    <StartButtons>
                      <FlatButton>Install Apps</FlatButton>
                    </StartButtons>
                  </StartColumn>
                  <StartColumn $separated>
                    <StartHeading>Create a Custom Website</StartHeading>
                    <StartText>Upload your web content and add databases.</StartText>
                    <StartButtons>
                      <FlatButton>Files</FlatButton>
                      <FlatButton>Databases</FlatButton>
                    </StartButtons>
                  </StartColumn>
                </StartColumns>
                <ShowLess>
                  <ChevronUp size={12} strokeWidth={3} />
                  SHOW LESS
                </ShowLess>
                <LinkGrid>
                  {TILES.map((t) => (
                    <LinkItem key={t.label}>
                      {t.icon}
                      <div>
                        <A>{t.label}</A>
                        {t.note && <LinkNote>{t.note}</LinkNote>}
                      </div>
                    </LinkItem>
                  ))}
                </LinkGrid>
              </PanelBody>
            </Panel>
          </LeftColumn>

          <RightColumn>
            <QuickBox>
              <QuickLink>
                <QBackup />
                <A>Backup Manager</A>
              </QuickLink>
              <QuickLink>
                <QDatabase />
                <A>Databases</A>
              </QuickLink>
              <QuickLink>
                <QCalendar />
                <A>Scheduled Tasks</A>
              </QuickLink>
              <QuickLink>
                <FaWordpress size={24} color="#4b9cc6" />
                <A>WordPress</A>
              </QuickLink>
            </QuickBox>

            <CardHeader>
              Promo
              <ChevronDown size={20} strokeWidth={2.4} />
            </CardHeader>

            <div>
              <CardHeader>
                Hosting
                <ChevronUp size={20} strokeWidth={2.4} />
              </CardHeader>
              <CardBody>
                <Fact>
                  IP address: <FactStrong>195.214.233.141 (shared)</FactStrong>
                </Fact>
                <Fact>
                  System user: <FactStrong>testu</FactStrong>
                </Fact>
                <Fact>
                  <StatusLine>
                    Subscription status: <GreenCheck />
                    <StatusValue>Active</StatusValue>
                  </StatusLine>
                  <Muted>[Suspend]</Muted>
                </Fact>
                <Fact $close>
                  Administrator's description: <Muted>[Add description]</Muted>
                </Fact>
                <Fact>
                  Disk space: <FactStrong>0%</FactStrong>
                  <Usage />
                  0 MB used of 10 GB
                </Fact>
                <Fact>
                  Traffic: <FactStrong>0%</FactStrong>
                  <Usage />
                  0 MB/month used of 100 GB/month
                </Fact>
                <WithIcon>
                  <TinyChart />
                  <A>View More Statistics</A>
                </WithIcon>
              </CardBody>
            </div>

            <div>
              <CardHeader>
                Account
                <ChevronUp size={20} strokeWidth={2.4} />
              </CardHeader>
              <CardBody $tight>
                <Fact>
                  Subscriber: <FactStrong>Demo Admin (Plesk)</FactStrong>
                  <br />
                  <Muted>[Change subscriber]</Muted>
                </Fact>
                <Fact>
                  Service plan: <A $bold>Default Domain</A>
                </Fact>
                <Fact>Add-ons: —</Fact>
                <WithIcon>
                  <TinyChange />
                  <A>Change plan/add-ons</A>
                </WithIcon>
                <WithIcon>
                  <TinySliders />
                  <A>Customize</A>
                </WithIcon>
                <Fact>
                  Creation date: <FactStrong>April 26, 2018</FactStrong>
                </Fact>
                <Fact>Renewal date: —</Fact>
              </CardBody>
            </div>
            <Highlight />
          </RightColumn>
        </Columns>
      </Main>
    </Page>
  );
}
